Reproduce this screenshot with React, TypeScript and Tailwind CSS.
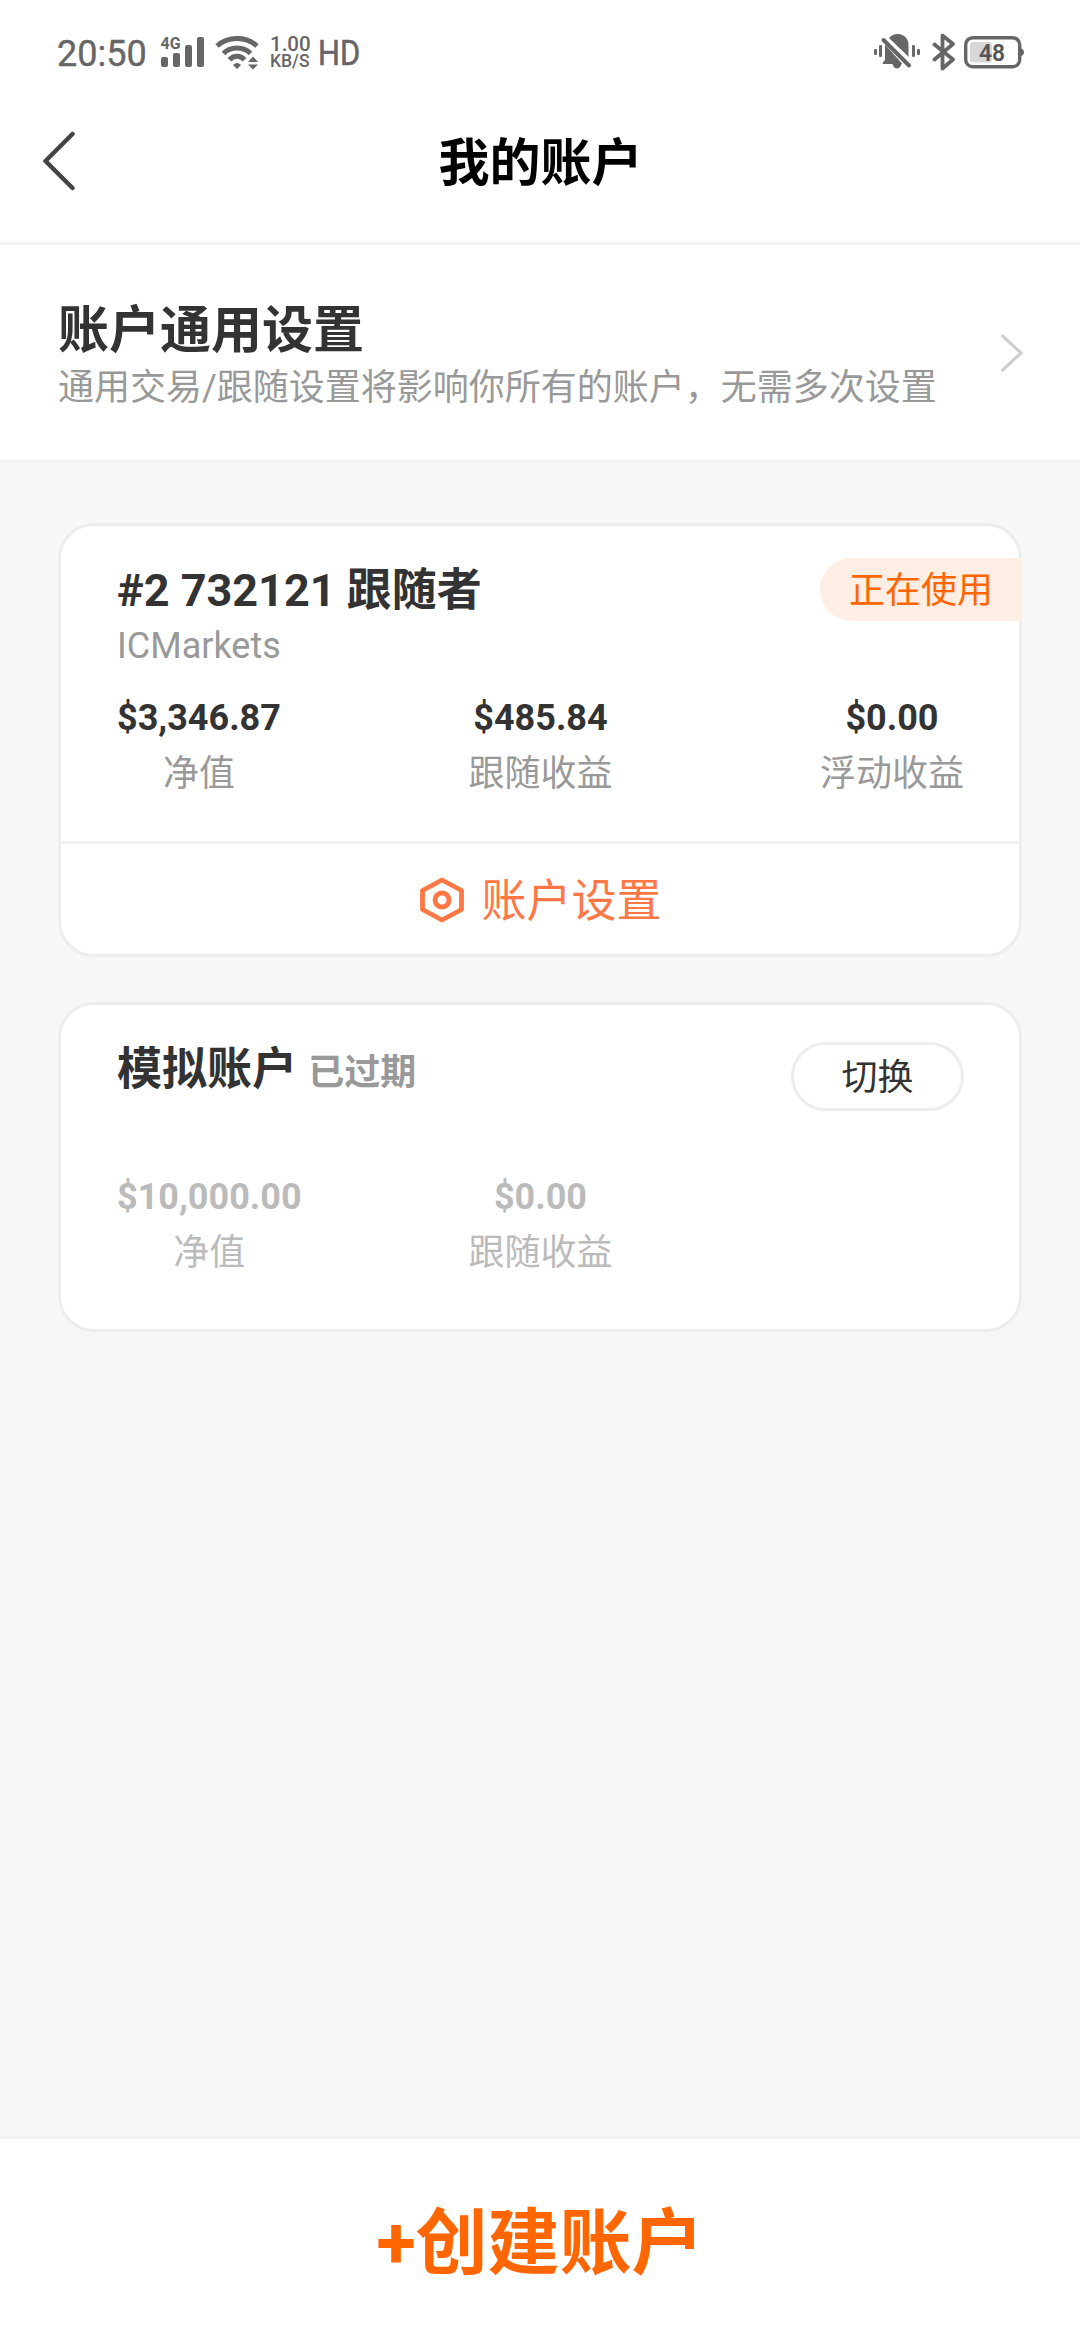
import type { ReactNode } from 'react'
import clsx from 'clsx'

type Stat = { value: string; label: string }

const liveStats: Stat[] = [
  { value: '$3,346.87', label: '净值' },
  { value: '$485.84', label: '跟随收益' },
  { value: '$0.00', label: '浮动收益' },
]

const demoStats: Stat[] = [
  { value: '$10,000.00', label: '净值' },
  { value: '$0.00', label: '跟随收益' },
]

function SignalIcon() {
  return (
    <svg width="46" height="34" viewBox="0 0 46 34" fill="currentColor">
      <text x="1.5" y="13.5" fontSize="16.5" fontWeight="700" textLength="20" lengthAdjust="spacingAndGlyphs">
        4G
      </text>
      <rect x="2" y="22" width="7" height="10" rx="2" />
      <rect x="14" y="18" width="7" height="14" rx="2" />
      <rect x="26" y="10" width="7" height="22" rx="2" />
      <rect x="38" y="2" width="7" height="30" rx="2" />
    </svg>
  )
}

function WifiIcon() {
  return (
    <svg width="44" height="36" viewBox="0 0 44 36" fill="none" stroke="currentColor" strokeWidth="5">
      <path d="M2 12C13 2 31 2 42 12" />
      <path d="M8.5 19.5C15.5 12.3 28.5 12.3 35.5 19.5" />
      <path d="M14.5 25.8C18.5 21.2 25.5 21.2 29.5 25.8" />
      <path d="M18 31C20.5 28.3 23.5 28.3 26 31L22 35Z" fill="currentColor" stroke="none" />
      <path d="M33 28L38 22.5L43 28ZM33 30.5L43 30.5L38 35.5Z" fill="currentColor" stroke="none" />
    </svg>
  )
}

function MutedBellIcon() {
  return (
    <svg width="46" height="36" viewBox="0 0 46 36" fill="currentColor">
      <rect x="0" y="15" width="3" height="6" rx="1.2" />
      <rect x="5" y="11" width="3" height="12" rx="1.2" />
      <rect x="38" y="11" width="3" height="12" rx="1.2" />
      <rect x="43" y="15" width="3" height="6" rx="1.2" />
      <path d="M15 4C17.5 1.3 20 0 23.5 0C30.5 0 34.5 5 34.5 11V22.8Z" />
      <path d="M11 10.5L28.5 30H27.5C27 32.6 25 34.5 23 34.5C21 34.5 19 32.6 18.5 30H9.5C8.6 30 8.3 28.8 9 28.2L11 26Z" />
      <path d="M9.5 6L35 31.5" stroke="currentColor" strokeWidth="4" strokeLinecap="round" />
    </svg>
  )
}

function BluetoothIcon() {
  return (
    <svg
      width="24"
      height="38"
      viewBox="0 0 24 38"
      fill="none"
      stroke="currentColor"
      strokeWidth="3.8"
      strokeLinejoin="round"
      strokeLinecap="round"
    >
      <path d="M2.5 11.5L21 26.5L10.5 35.5V2.5L21 11L2.5 26.5" />
    </svg>
  )
}

function BatteryIcon() {
  return (
    <svg width="60" height="33" viewBox="0 0 60 33">
      <rect x="1.7" y="1.7" width="54" height="29" rx="7" fill="none" stroke="currentColor" strokeWidth="3.4" />
      <path d="M57 12.5C59.2 13 60 14.5 60 16.2C60 18 59.2 19.4 57 20Z" fill="currentColor" />
      <rect x="6" y="6" width="22" height="20.5" rx="3" fill="#d8d8d8" />
      <text x="15" y="25" fontSize="24" fontWeight="600" fill="#555" textLength="26" lengthAdjust="spacingAndGlyphs">
        48
      </text>
    </svg>
  )
}

function StatusBar() {
  return (
    <div className="flex h-[104px] items-center pr-[56px] pl-[57px] text-[#666]">
      <span className="w-[102px] pt-[3px] text-[36px] leading-[42px] [-webkit-text-stroke:0.4px]">20:50</span>
      <SignalIcon />
      <div className="ml-[10px]">
        <WifiIcon />
      </div>
      <div className="ml-[11px] flex w-[48px] flex-col pt-px font-medium">
        <span className="text-[20.5px] leading-[17px]">1.00</span>
        <span className="text-[17.5px] leading-[16px]">KB/S</span>
      </div>
      <span className="origin-left scale-x-[0.88] pt-[3px] text-[35px] leading-[42px] [-webkit-text-stroke:0.6px]">HD</span>
      <div className="ml-auto flex items-center">
        <MutedBellIcon />
        <div className="mr-[8px] ml-[12px]">
          <BluetoothIcon />
        </div>
        <BatteryIcon />
      </div>
    </div>
  )
}

function Stats({ items, muted }: { items: Stat[]; muted?: boolean }) {
  return (
    <div className={clsx('grid grid-cols-3 text-[36px] leading-[56px]', muted ? 'text-[#bbb]' : 'text-[#333]')}>
      {items.map(({ value, label }) => (
        <div
          key={label}
          className="flex flex-col items-center first:justify-self-start nth-2:justify-self-center nth-3:justify-self-end"
        >
          <span className="font-bold">{value}</span>
          <span className={muted ? '' : 'text-[#999]'}>{label}</span>
        </div>
      ))}
    </div>
  )
}

function Card({ children, className }: { children: ReactNode; className: string }) {
  return (
    <section className={clsx('mr-[58px] ml-[58px] flex flex-col rounded-[36px] border-[3px] border-[#ededed] bg-white', className)}>
      {children}
    </section>
  )
}

export default function App() {
  return (
    <div className="flex h-[2340px] w-[1080px] flex-col bg-[#f7f7f7] font-[Roboto,'Noto_Sans_CJK_SC',sans-serif]">
      <header className="h-[245px] border-b-[3px] border-[#f2f2f2] bg-white">
        <StatusBar />
        <div className="grid h-[114px] grid-cols-3 items-center pl-[42px]">
          <svg
            width="34"
            height="60"
            viewBox="0 0 34 60"
            fill="none"
            stroke="#444"
            strokeWidth="4.5"
            strokeLinecap="round"
            strokeLinejoin="round"
          >
            <path d="M30.5 3L3.5 30L30.5 57" />
          </svg>
          <h1 className="-ml-[41px] pt-[5px] text-center text-[51px] leading-[60px] font-bold text-black">我的账户</h1>
        </div>
      </header>

      <section className="flex h-[218px] items-center justify-between border-b-[3px] border-[#f2f2f2] bg-white pr-[57px] pl-[58px]">
        <div className="pt-[10px]">
          <h2 className="text-[51px] leading-[61px] font-bold text-[#333]">账户通用设置</h2>
          <p className="text-[36px] leading-[55px] text-[#999]">通用交易/跟随设置将影响你所有的账户，无需多次设置</p>
        </div>
        <svg width="22" height="38" viewBox="0 0 22 38" fill="none" stroke="#ccc" strokeWidth="3">
          <path d="M0.5 1L20 19L0.5 37" />
        </svg>
      </section>

      <Card className="mt-[60px] h-[434px]">
        <div className="flex h-[164px] justify-between pt-[32px] pl-[56px]">
          <div className="whitespace-nowrap">
            <h3 className="pt-[3px] text-[45px] leading-[60px] font-bold text-[#333]">#2 732121 跟随者</h3>
            <p className="text-[36px] leading-[50px] text-[#999]">ICMarkets</p>
          </div>
          <span className="-mr-[3px] h-[63px] w-[202px] rounded-l-full bg-[#ffeee4] pl-[29px] text-[36px] leading-[66px] text-[#ff6600]">
            正在使用
          </span>
        </div>
        <div className="pr-[55px] pl-[56px]">
          <Stats items={liveStats} />
        </div>
        <div className="-mx-[3px] mt-auto -mb-px flex h-[114px] items-center justify-center gap-[17px] border-t-[3px] border-[#f2f2f2] pl-[2px] text-[45px] leading-[60px] text-[#ff7744]">
          <svg
            width="44"
            height="46"
            viewBox="0 0 44 46"
            fill="none"
            stroke="currentColor"
            strokeWidth="4.8"
            strokeLinejoin="round"
          >
            <path d="M22 3L41.500 13.500V32.500L22 43L2.500 32.500V13.500Z" />
            <circle cx="22" cy="23" r="7" />
          </svg>
          <span className="pt-[5px]">账户设置</span>
        </div>
      </Card>

      <Card className="mt-[45px] h-[330px] pr-[55px] pl-[56px]">
        <div className="flex h-[164px] justify-between pt-[37px]">
          <h3 className="text-[45px] leading-[56px] font-bold text-[#333]">
            模拟账户 <span className="text-[36px] text-[#999]">已过期</span>
          </h3>
          <button className="h-[69px] w-[173px] rounded-full border-[3px] border-[#ededed] text-[36px] leading-[67px] text-[#333]">
            切换
          </button>
        </div>
        <Stats items={demoStats} muted />
      </Card>

      <footer className="mt-auto flex h-[204px] items-center justify-center border-t-[3px] border-[#f2f2f2] bg-white">
        <button className="pt-[8px] text-[72px] leading-[84px] font-bold text-[#ff6600]">+创建账户</button>
      </footer>
    </div>
  )
}
